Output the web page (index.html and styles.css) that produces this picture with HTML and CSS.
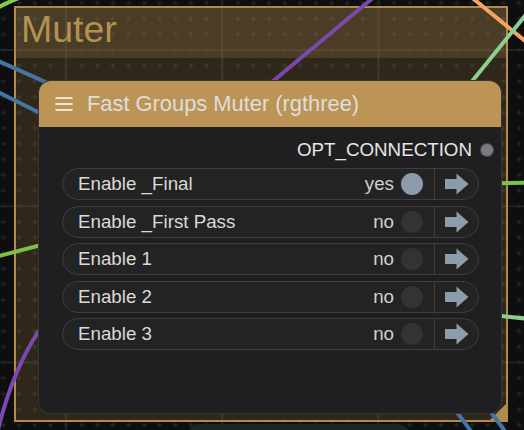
FILE: index.html
```html
<!DOCTYPE html>
<html>
<head>
<meta charset="utf-8">
<link rel="stylesheet" href="styles.css">
</head>
<body>
<div class="canvas">
  <svg class="layer" width="524" height="430" viewBox="0 0 524 430">
    <defs>
      <pattern id="dots" patternUnits="userSpaceOnUse" x="58.1875" y="42.1875" width="15.625" height="15.625">
        <path d="M5.3 7.8H10.3M7.8 5.3V10.3" stroke="#2c2c2c" stroke-width="1" fill="none"/>
      </pattern>
    </defs>
    <rect width="524" height="430" fill="#0e0e0e"/>
    <rect width="524" height="430" fill="url(#dots)"/>
    <g stroke="#202327" stroke-width="2">
      <line x1="66" y1="0" x2="66" y2="430"/>
      <line x1="222.25" y1="0" x2="222.25" y2="430"/>
      <line x1="378.5" y1="0" x2="378.5" y2="430"/>
      <line x1="0" y1="50" x2="524" y2="50"/>
      <line x1="0" y1="206.25" x2="524" y2="206.25"/>
      <line x1="0" y1="362.5" x2="524" y2="362.5"/>
    </g>
  </svg>

  <div class="group">
    <div class="group-header"><span class="group-title">Muter</span></div>
  </div>

  <div class="peek-node"></div>

  <svg class="layer" width="524" height="430" viewBox="0 0 524 430">
    <g fill="none" stroke-width="4" stroke-linecap="round">
      <path d="M-3 8 Q8 2 24 -4" stroke="#86c94c"/>
      <path d="M-5 59.5 L60 88.5" stroke="#4574a6"/>
      <path d="M-5 90.5 L60 123" stroke="#4574a6"/>
      <path d="M374 -3 L260 92" stroke="#7b48ad"/>
      <path d="M-3 434 Q14 362 48 318" stroke="#7b48ad"/>
      <path d="M470 -4 L530 45" stroke="#f2a563"/>
      <path d="M530 9.6 L465 90" stroke="#8dcf90"/>
      <path d="M492 183.5 L530 182.5" stroke="#7cc146"/>
      <path d="M-5 257 L45 244" stroke="#7cc146"/>
      <path d="M492 315 L530 319" stroke="#8dcf90"/>
      <path d="M448 400 L473 434" stroke="#4574a6"/>
      <path d="M482 400 L507 434" stroke="#4574a6"/>
    </g>
  </svg>

  <div class="node">
    <div class="node-title">
      <svg class="menu-icon" width="18" height="16" viewBox="0 0 18 16">
        <path d="M0.5 2H17.5M0.5 8H17.5M0.5 14H17.5" stroke="#efe6d6" stroke-width="2" fill="none"/>
      </svg>
      <span class="node-name">Fast Groups Muter (rgthree)</span>
    </div>
    <div class="node-body">
      <div class="output">
        <span class="output-name">OPT_CONNECTION</span>
        <span class="slot"></span>
      </div>
      <div class="widgets">
        <div class="toggle on">
          <span class="label">Enable _Final</span>
          <span class="value">yes</span>
          <span class="knob"></span>
          <span class="nav"><svg width="24" height="22" viewBox="0 0 24 22"><path d="M0 6H11.5V0.5L23.5 11L11.5 21.5V16H0Z" class="arrow"/></svg></span>
        </div>
        <div class="toggle">
          <span class="label">Enable _First Pass</span>
          <span class="value">no</span>
          <span class="knob"></span>
          <span class="nav"><svg width="24" height="22" viewBox="0 0 24 22"><path d="M0 6H11.5V0.5L23.5 11L11.5 21.5V16H0Z" class="arrow"/></svg></span>
        </div>
        <div class="toggle">
          <span class="label">Enable 1</span>
          <span class="value">no</span>
          <span class="knob"></span>
          <span class="nav"><svg width="24" height="22" viewBox="0 0 24 22"><path d="M0 6H11.5V0.5L23.5 11L11.5 21.5V16H0Z" class="arrow"/></svg></span>
        </div>
        <div class="toggle">
          <span class="label">Enable 2</span>
          <span class="value">no</span>
          <span class="knob"></span>
          <span class="nav"><svg width="24" height="22" viewBox="0 0 24 22"><path d="M0 6H11.5V0.5L23.5 11L11.5 21.5V16H0Z" class="arrow"/></svg></span>
        </div>
        <div class="toggle">
          <span class="label">Enable 3</span>
          <span class="value">no</span>
          <span class="knob"></span>
          <span class="nav"><svg width="24" height="22" viewBox="0 0 24 22"><path d="M0 6H11.5V0.5L23.5 11L11.5 21.5V16H0Z" class="arrow"/></svg></span>
        </div>
      </div>
    </div>
  </div>
</div>
</body>
</html>
```

FILE: styles.css
```css
html, body {
  margin: 0;
  padding: 0;
  background: #0e0e0e;
}

.canvas {
  position: relative;
  width: 524px;
  height: 430px;
  overflow: hidden;
  font-family: "Liberation Sans", Arial, sans-serif;
}

.layer {
  position: absolute;
  left: 0;
  top: 0;
  display: block;
}

.group {
  position: absolute;
  left: 14px;
  top: 6px;
  width: 494px;
  height: 416px;
  box-sizing: border-box;
  border: 2px solid #b18b4d;
  background: rgba(176, 138, 76, 0.2);
}

.group::after {
  content: "";
  position: absolute;
  right: 0;
  bottom: 0;
  width: 16px;
  height: 16px;
  background: #b18b4d;
  clip-path: polygon(100% 0, 100% 100%, 0 100%);
}

.group-header {
  height: 50px;
  background: rgba(176, 138, 76, 0.22);
  padding-left: 5px;
}

.group-title {
  display: block;
  font-size: 37.5px;
  line-height: 43px;
  color: #b3914f;
}

.peek-node {
  position: absolute;
  left: 188px;
  top: 424px;
  width: 221px;
  height: 20px;
  background: #1c261d;
  border-radius: 10px 10px 0 0;
}

.node {
  position: absolute;
  left: 39px;
  top: 81px;
  width: 462px;
  height: 332px;
  border-radius: 12px;
  background: #1f1f21;
  box-shadow: 0 0 0 1px #363638;
  display: flex;
  flex-direction: column;
  overflow: hidden;
}

.node-title {
  height: 46px;
  flex: none;
  background: #bc9455;
  display: flex;
  align-items: center;
  padding-left: 16px;
  gap: 14px;
}

.menu-icon {
  display: block;
  flex: none;
}

.node-name {
  font-size: 21.875px;
  color: #dedede;
  white-space: nowrap;
}

.node-body {
  flex: 1;
  padding-top: 7px;
}

.output {
  height: 32px;
  display: flex;
  align-items: center;
  justify-content: flex-end;
  padding-right: 8px;
  gap: 9px;
}

.output-name {
  font-size: 18.75px;
  color: #e6e6e6;
}

.slot {
  width: 12px;
  height: 12px;
  border-radius: 50%;
  background: #7a7a84;
  box-shadow: 0 0 0 1px #4a4a50;
}

.widgets {
  margin: 2px 22px 0 23px;
  display: flex;
  flex-direction: column;
  gap: 5.5px;
}

.toggle {
  height: 32px;
  box-sizing: border-box;
  border: 1px solid #3e3e3e;
  border-radius: 16px;
  background: #232323;
  display: flex;
  align-items: center;
  font-size: 18.75px;
}

.label {
  flex: 1;
  padding-left: 15px;
  color: #dadada;
  white-space: nowrap;
}

.value {
  margin-right: 7px;
  color: #d0d0d0;
}

.knob {
  width: 22px;
  height: 22px;
  border-radius: 50%;
  background: #333334;
  margin-right: 11px;
}

.toggle.on .knob {
  background: #8b9bab;
}

.nav {
  align-self: stretch;
  width: 43px;
  border-left: 1px solid #3e3e3e;
  display: flex;
  align-items: center;
  justify-content: center;
}

.nav svg {
  display: block;
}

.arrow {
  fill: #8c9cab;
}
```
